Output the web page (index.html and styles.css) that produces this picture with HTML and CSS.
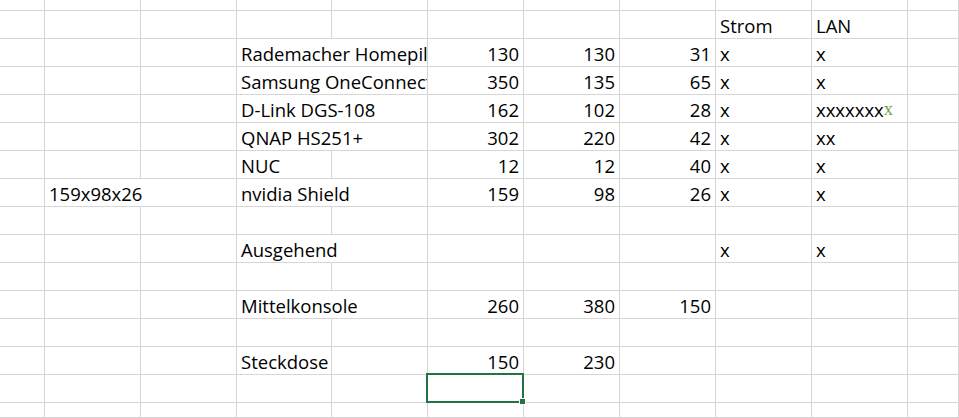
FILE: index.html
```html
<!DOCTYPE html>
<html lang="de">
<head>
<meta charset="utf-8">
<title>Tabelle</title>
<link rel="stylesheet" href="styles.css">
</head>
<body>
<div class="sheet">
  <!-- row 1 (partial) -->
  <div class="c"></div><div class="c"></div><div class="c"></div><div class="c"></div><div class="c"></div><div class="c"></div><div class="c"></div><div class="c"></div><div class="c"></div><div class="c"></div><div class="c"></div>
  <!-- row 2 -->
  <div class="c"></div><div class="c"></div><div class="c"></div><div class="c"></div><div class="c"></div><div class="c"></div><div class="c"></div><div class="c"></div><div class="c">Strom</div><div class="c">LAN</div><div class="c"></div>
  <!-- row 3 -->
  <div class="c"></div><div class="c"></div><div class="c"></div><div class="c span2">Rademacher Homepil</div><div class="c n">130</div><div class="c n">130</div><div class="c n">31</div><div class="c">x</div><div class="c">x</div><div class="c"></div>
  <!-- row 4 -->
  <div class="c"></div><div class="c"></div><div class="c"></div><div class="c span2">Samsung OneConnect</div><div class="c n">350</div><div class="c n">135</div><div class="c n">65</div><div class="c">x</div><div class="c">x</div><div class="c"></div>
  <!-- row 5 -->
  <div class="c"></div><div class="c"></div><div class="c"></div><div class="c span2">D-Link DGS-108</div><div class="c n">162</div><div class="c n">102</div><div class="c n">28</div><div class="c">x</div><div class="c">xxxxxxx<span class="green">x</span></div><div class="c"></div>
  <!-- row 6 -->
  <div class="c"></div><div class="c"></div><div class="c"></div><div class="c span2">QNAP HS251+</div><div class="c n">302</div><div class="c n">220</div><div class="c n">42</div><div class="c">x</div><div class="c">xx</div><div class="c"></div>
  <!-- row 7 -->
  <div class="c"></div><div class="c"></div><div class="c"></div><div class="c">NUC</div><div class="c"></div><div class="c n">12</div><div class="c n">12</div><div class="c n">40</div><div class="c">x</div><div class="c">x</div><div class="c"></div>
  <!-- row 8 -->
  <div class="c"></div><div class="c span2">159x98x26</div><div class="c span2">nvidia Shield</div><div class="c n">159</div><div class="c n">98</div><div class="c n">26</div><div class="c">x</div><div class="c">x</div><div class="c"></div>
  <!-- row 9 -->
  <div class="c"></div><div class="c"></div><div class="c"></div><div class="c"></div><div class="c"></div><div class="c"></div><div class="c"></div><div class="c"></div><div class="c"></div><div class="c"></div><div class="c"></div>
  <!-- row 10 -->
  <div class="c"></div><div class="c"></div><div class="c"></div><div class="c span2">Ausgehend</div><div class="c"></div><div class="c"></div><div class="c"></div><div class="c">x</div><div class="c">x</div><div class="c"></div>
  <!-- row 11 -->
  <div class="c"></div><div class="c"></div><div class="c"></div><div class="c"></div><div class="c"></div><div class="c"></div><div class="c"></div><div class="c"></div><div class="c"></div><div class="c"></div><div class="c"></div>
  <!-- row 12 -->
  <div class="c"></div><div class="c"></div><div class="c"></div><div class="c span2">Mittelkonsole</div><div class="c n">260</div><div class="c n">380</div><div class="c n">150</div><div class="c"></div><div class="c"></div><div class="c"></div>
  <!-- row 13 -->
  <div class="c"></div><div class="c"></div><div class="c"></div><div class="c"></div><div class="c"></div><div class="c"></div><div class="c"></div><div class="c"></div><div class="c"></div><div class="c"></div><div class="c"></div>
  <!-- row 14 -->
  <div class="c"></div><div class="c"></div><div class="c"></div><div class="c">Steckdose</div><div class="c"></div><div class="c n">150</div><div class="c n">230</div><div class="c"></div><div class="c"></div><div class="c"></div><div class="c"></div>
  <!-- row 15 -->
  <div class="c"></div><div class="c"></div><div class="c"></div><div class="c"></div><div class="c"></div><div class="c active"><div class="sel"><div class="handle"></div></div></div><div class="c"></div><div class="c"></div><div class="c"></div><div class="c"></div><div class="c"></div>
  <!-- row 16 (partial) -->
  <div class="c"></div><div class="c"></div><div class="c"></div><div class="c"></div><div class="c"></div><div class="c"></div><div class="c"></div><div class="c"></div><div class="c"></div><div class="c"></div><div class="c"></div>
</div>
</body>
</html>
```

FILE: styles.css
```css
html, body {
  margin: 0;
  padding: 0;
  background: #ffffff;
}

body {
  width: 959px;
  height: 418px;
  overflow: hidden;
  font-family: "Open Sans", "Liberation Sans", sans-serif;
  font-size: 18.5px;
  color: #000000;
}

.sheet {
  display: grid;
  grid-template-columns: 45px 96px 96px 95px 96px 96px 96px 96px 96px 96px 51px;
  grid-template-rows: 11px repeat(14, 28px) 15px;
  width: 959px;
  height: 418px;
}

.c {
  box-sizing: border-box;
  border-right: 1px solid #d6d6d6;
  border-bottom: 1px solid #d6d6d6;
  display: flex;
  align-items: flex-end;
  padding: 0 0 0 4px;
  white-space: nowrap;
  overflow: hidden;
  line-height: 25px;
}

.span2 {
  grid-column: span 2;
}

.n {
  justify-content: flex-end;
  padding: 0 4px 0 0;
}

.green {
  color: #6fa64a;
  font-family: "Liberation Serif", serif;
}

.active {
  position: relative;
  overflow: visible;
}

.sel {
  position: absolute;
  left: -2px;
  top: -2px;
  right: -1px;
  bottom: -1px;
  border: 2px solid #217346;
  z-index: 2;
}

.handle {
  position: absolute;
  right: -3px;
  bottom: -3px;
  width: 5px;
  height: 5px;
  background: #217346;
  box-shadow: 0 0 0 1px #ffffff;
}
```
